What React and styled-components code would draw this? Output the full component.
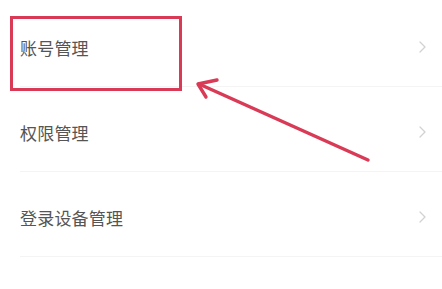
import React from "react";
import styled, { createGlobalStyle } from "styled-components";

const Global = createGlobalStyle`
  html, body { margin: 0; padding: 0; background: #ffffff; }
  body { font-family: "Noto Sans CJK SC", "Noto Sans", sans-serif; }
`;

const Page = styled.div`
  position: relative;
  width: 442px;
  height: 289px;
  overflow: hidden;
  background: #ffffff;
`;

const List = styled.div`
  display: flex;
  flex-direction: column;
  padding-top: 3px;
`;

const Row = styled.div`
  height: 84px;
  display: flex;
  align-items: center;
  justify-content: space-between;
  margin: 0 0 1px 20px;
  padding: 5px 16px 0 0;
  box-sizing: border-box;
  border-bottom: 1px solid #f4f4f4;
`;

const Label = styled.span`
  font-size: 17px;
  color: #555555;
  letter-spacing: 0.2px;
`;

const Chevron = () => (
  <svg width="7" height="12" viewBox="0 0 7 12">
    <polyline points="1,1 6,6 1,11" fill="none" stroke="#d2d2d2" strokeWidth="1.3" strokeLinecap="round" strokeLinejoin="round" />
  </svg>
);

const HighlightBox = styled.div`
  position: absolute;
  left: 10px;
  top: 16px;
  width: 172px;
  height: 75px;
  box-sizing: border-box;
  border: 3px solid #d93a55;
`;

const ArrowLayer = styled.svg`
  position: absolute;
  left: 0;
  top: 0;
  pointer-events: none;
`;

const items = ["账号管理", "权限管理", "登录设备管理"];

export default function App() {
  return (
    <Page>
      <Global />
      <List>
        {items.map((t) => (
          <Row key={t}>
            <Label>{t}</Label>
            <Chevron />
          </Row>
        ))}
      </List>
      <HighlightBox />
      <ArrowLayer width="442" height="289" viewBox="0 0 442 289">
        <g stroke="#d93a55" strokeWidth="3.4" strokeLinecap="round" strokeLinejoin="round" fill="none">
          <line x1="368" y1="160" x2="199" y2="84" />
          <polyline points="217,80 198,84 206,97" />
        </g>
      </ArrowLayer>
    </Page>
  );
}
